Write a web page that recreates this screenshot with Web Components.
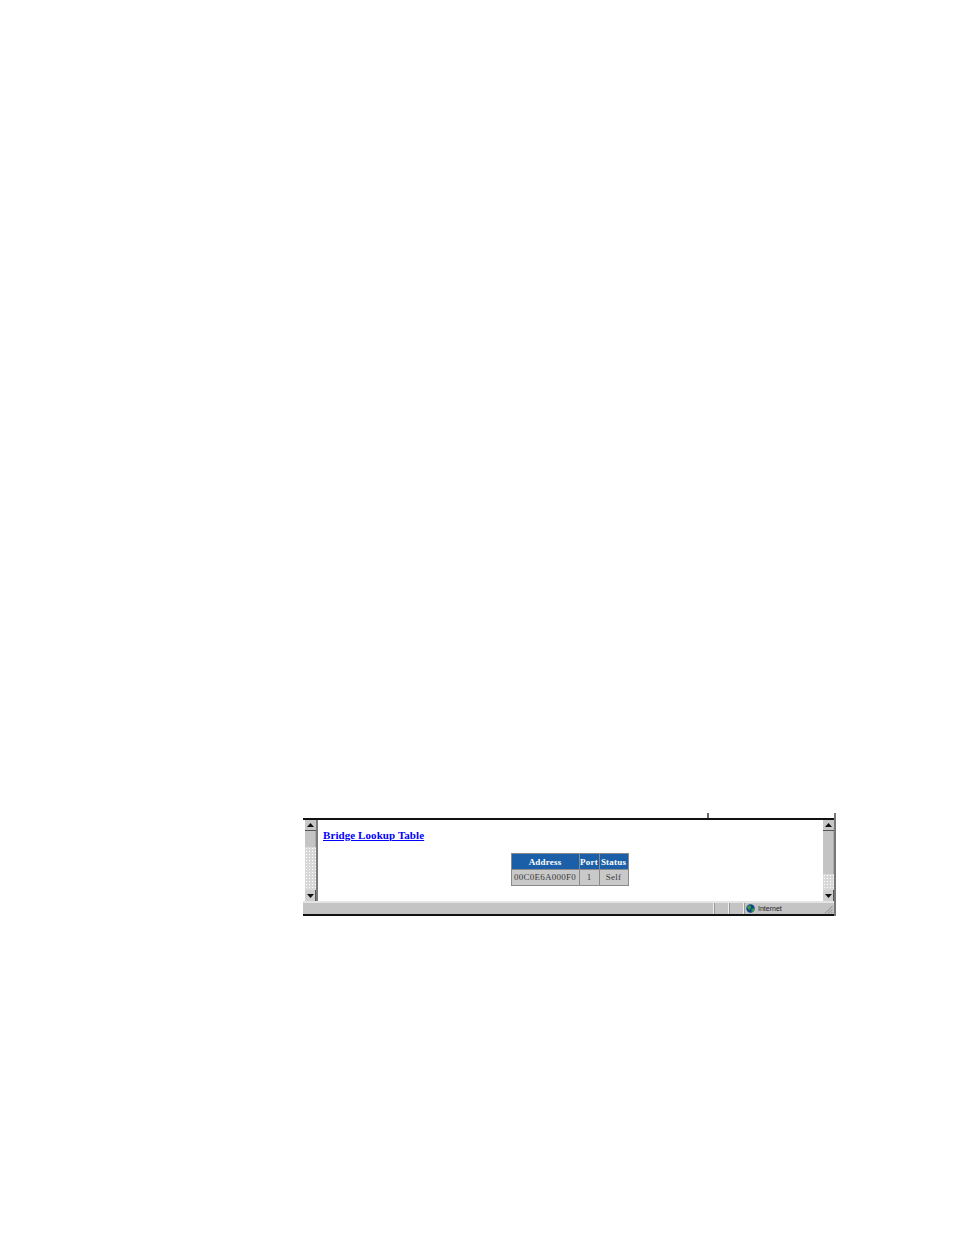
<!DOCTYPE html>
<html><head><meta charset="utf-8"><style>html,body{margin:0;padding:0;background:#fff}</style></head><body>
<template id="sb"><style>
:host{display:flex;flex-direction:column;width:11px;background-color:#d8d8d8;background-image:radial-gradient(#fff 0.8px,transparent 1px);background-size:3px 3px}
.b{height:11px;flex:none;background:#c6c6c6;border-bottom:1px solid #555;box-sizing:border-box;display:flex;align-items:center;justify-content:center}
.b.d{border-bottom:0;border-right:1px solid #555;background:#cfcfcf}
.t{flex:none;background:#c4c4c4;border-right:1px solid #aaa;box-sizing:border-box}
.s{flex:1}
svg{display:block}
</style><div class="b"><svg width="7" height="4"><path d="M3.5 0L7 4H0z" fill="#111"/></svg></div><div class="t" id="t"></div><div class="s"></div><div class="b d"><svg width="7" height="4"><path d="M0 0H7L3.5 4z" fill="#111"/></svg></div></template>

<template id="st"><style>
:host{display:flex;height:15px;box-sizing:border-box;background:#c4c4c4;border-top:2px solid #e4e4e4;border-bottom:2px solid #111;font:7px "Liberation Sans",sans-serif;color:#222}
.m{flex:1}
.c{box-sizing:border-box;border-left:1px solid #eee;box-shadow:inset 1px 0 0 #999;flex:none}
.i{width:15px}
.n{width:81px;display:flex;align-items:center;gap:3px;padding-left:2px}
svg{display:block;flex:none}
</style><div class="m"></div><div class="c i"></div><div class="c i"></div><div class="c n"><svg width="9" height="9" viewBox="0 0 9 9"><circle cx="4.5" cy="4.5" r="4.2" fill="#12408a"/><path d="M1 2.5L4.2 1 5.2 3.7 3.5 6 1.8 4.8zM5.5 4.8L8.4 4 7.4 7.5 5.5 8.2z" fill="#2fa040"/></svg><span>Internet</span></div><svg width="9" height="9" viewBox="0 0 9 9" style="align-self:flex-end;margin-right:1px"><path d="M8.5 1L1 8.5M8.5 4L4 8.5M8.5 7L7 8.5" stroke="#888" fill="none"/></svg></template>

<template id="bt"><style>
:host{display:table;border-collapse:separate;border-spacing:1px;background:#8a8a8a;font:9px "Liberation Serif",serif;color:#3a3a3a}
.r{display:table-row}
.c{display:table-cell;text-align:center;vertical-align:middle;height:15px;background:#c9c9c9;letter-spacing:.25px;padding:0 0 1px;box-sizing:border-box}
.h .c{background:#1a5fa8;color:#fff;font-weight:bold;letter-spacing:.2px;padding:0}
.a{width:67px}.p{width:19px}.s{width:28px}
</style><div class="r h"><div class="c a">Address</div><div class="c p">Port</div><div class="c s">Status</div></div><div class="r"><div class="c a">00C0E6A000F0</div><div class="c p">1</div><div class="c s">Self</div></div></template>

<template id="bw"><style>
:host{display:flex;flex-direction:column;position:relative;width:533px;box-sizing:border-box;border-right:2px solid #777;padding-top:5px}
.tick{position:absolute;left:404px;top:0;width:2px;height:5px;background:#666}
.top{height:2px;background:#111;flex:none}
.main{display:flex;height:81px;padding-left:2px;background:#fff}
.gut{width:2px;background:#7b7b7b;flex:none}
.content{flex:1;padding:8px 0 0 5px;min-width:0}
h1{margin:0;font:bold 11px/14px "Liberation Serif",serif;letter-spacing:.08px;color:#00f;text-decoration:underline}
.center{display:flex;justify-content:center;margin-top:11px;padding-right:7px}
</style><div class="tick"></div><div class="top"></div><div class="main"><scroll-bar thumb="16"></scroll-bar><div class="gut"></div><div class="content"><h1>Bridge Lookup Table</h1><div class="center"><bridge-table></bridge-table></div></div><scroll-bar thumb="43"></scroll-bar></div><status-bar></status-bar></template>

<doc-page></doc-page>
<script>
const mk=(name,id,init)=>customElements.define(name,class extends HTMLElement{constructor(){super();this.attachShadow({mode:'open'}).appendChild(document.getElementById(id).content.cloneNode(true));}connectedCallback(){init&&init(this)}});
mk('scroll-bar','sb',e=>{e.shadowRoot.getElementById('t').style.height=e.getAttribute('thumb')+'px'});
mk('status-bar','st');mk('bridge-table','bt');mk('browser-window','bw');
customElements.define('doc-page',class extends HTMLElement{constructor(){super();this.attachShadow({mode:'open'}).innerHTML='<style>:host{display:block;height:1235px;box-sizing:border-box;padding:813px 0 0 303px;overflow:hidden}</style><browser-window></browser-window>';}});
</script></body></html>
